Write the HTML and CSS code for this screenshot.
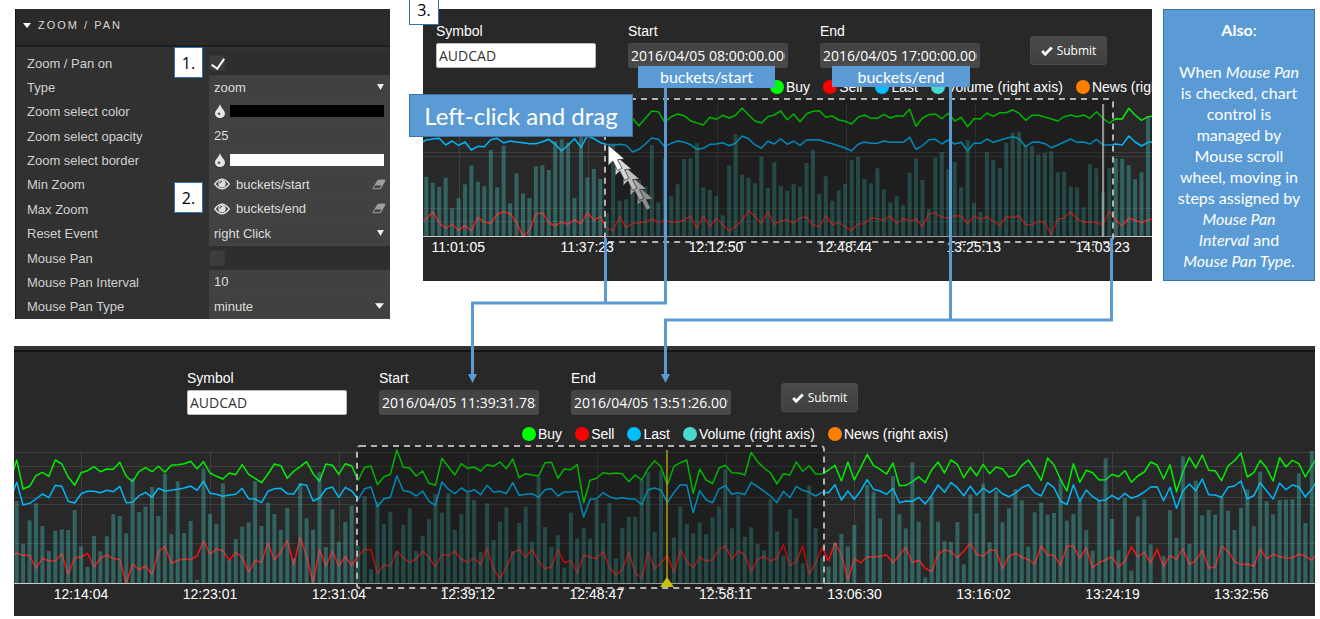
FILE: index.html
```html
<!DOCTYPE html>
<html lang="en">
<head>
<meta charset="utf-8">
<title>Zoom / Pan</title>
<link rel="stylesheet" href="styles.css">
</head>
<body>
<svg class="defs" aria-hidden="true">
  <symbol id="drop" viewBox="0 0 10 14"><path d="M5 0C4 4 0 6.500 0 9.500a5 4.500 0 0 0 10 0C10 6.500 6 4 5 0z" fill="#e6e6e6"/><circle cx="4" cy="9.800" r="1.300" fill="#555"/></symbol>
  <symbol id="eye" viewBox="0 0 16 12"><path d="M.8 6Q8-3.500 15.200 6 8 15.500.8 6z" fill="#444" stroke="#dcdcdc" stroke-width="1.500"/><circle cx="8" cy="5.700" r="3.700" fill="#dcdcdc"/><path d="M5.800 5.500A2.200 2.200 0 0 1 8 3.400" fill="none" stroke="#444"/></symbol>
  <symbol id="eraser" viewBox="0 0 15 11"><path d="M6.500.8h7.700L9 10H1z" fill="#999" stroke="#aaa"/><path d="M3.500 6.500h6.500L8.500 9.500H1.800z" fill="#414141"/></symbol>
  <symbol id="tick" viewBox="0 0 12 10"><path d="M1.200 5l3 3.200L10.800 1.500" fill="none" stroke="#fff" stroke-width="2.800"/></symbol>
  <symbol id="caret" viewBox="0 0 8 7"><path d="M0 0h8L4 7z" fill="#eee"/></symbol>
  <symbol id="caret-wide" viewBox="0 0 10 6"><path d="M0 0h10L5 6z" fill="#fff"/></symbol>
  <symbol id="pointer" viewBox="0 0 50 78" overflow="visible"><path d="M0 0V62L14 48 28 76 41 70 28 44 49 42z" stroke="#222" stroke-width="2"/></symbol>
</svg>

<main class="stage">
  <div class="top">
    <section class="settings">
      <h2 class="settings-head"><svg class="head-caret"><use href="#caret-wide"/></svg>ZOOM / PAN</h2>
      <div class="rows">
        <div class="row"><label for="on">Zoom / Pan on</label><div class="value bare"><input class="check" type="checkbox" id="on" checked></div></div>
        <div class="row"><label for="type">Type</label><div class="value"><select id="type"><option>zoom</option></select><svg class="caret"><use href="#caret"/></svg></div></div>
        <div class="row"><label for="color">Zoom select color</label><div class="value"><svg class="drop"><use href="#drop"/></svg><input class="swatch" type="color" id="color" value="#000000"></div></div>
        <div class="row"><label for="opacity">Zoom select opacity</label><div class="value"><input class="text" id="opacity" value="25"></div></div>
        <div class="row"><label for="border">Zoom select border</label><div class="value"><svg class="drop"><use href="#drop"/></svg><input class="swatch" type="color" id="border" value="#ffffff"></div></div>
        <div class="row"><label for="min">Min Zoom</label><div class="value"><svg class="eye"><use href="#eye"/></svg><input class="text" id="min" value="buckets/start"><button class="clear" aria-label="Clear"><svg><use href="#eraser"/></svg></button></div></div>
        <div class="row"><label for="max">Max Zoom</label><div class="value"><svg class="eye"><use href="#eye"/></svg><input class="text" id="max" value="buckets/end"><button class="clear" aria-label="Clear"><svg><use href="#eraser"/></svg></button></div></div>
        <div class="row"><label for="reset">Reset Event</label><div class="value"><select id="reset"><option>right Click</option></select><svg class="caret"><use href="#caret"/></svg></div></div>
        <div class="row"><label for="pan">Mouse Pan</label><div class="value bare"><input class="check" type="checkbox" id="pan"></div></div>
        <div class="row"><label for="interval">Mouse Pan Interval</label><div class="value"><input class="text" id="interval" value="10"></div></div>
        <div class="row"><label for="pantype">Mouse Pan Type</label><div class="value"><select id="pantype"><option>minute</option></select><svg class="caret wide"><use href="#caret-wide"/></svg></div></div>
      </div>
      <span class="step step-1">1.</span>
      <span class="step step-2">2.</span>
    </section>

    <section class="chart chart-before">
      <div class="chart-body">
        <form class="query">
          <div class="field"><label for="s1">Symbol</label><input class="light" id="s1" value="AUDCAD"></div>
          <div class="field"><label for="b1">Start</label><input id="b1" value="2016/04/05 08:00:00.000"></div>
          <div class="field"><label for="e1">End</label><input id="e1" value="2016/04/05 17:00:00.000"></div>
          <button class="submit" type="button"><svg><use href="#tick"/></svg>Submit</button>
        </form>
        <ul class="legend">
          <li class="buy">Buy</li><li class="sell">Sell</li><li class="last">Last</li><li class="volume">Volume (right axis)</li><li class="news">News (right axis)</li>
        </ul>
        <svg class="plot" id="before" viewBox="0 0 729 146" preserveAspectRatio="none"></svg>
        <div class="times"><span>11:01:05</span><span>11:37:23</span><span>12:12:50</span><span>12:48:44</span><span>13:25:13</span><span>14:03:23</span></div>
      </div>
    </section>

    <aside class="note">
      <p><b>Also</b>:</p>
      <p>When <i>Mouse Pan</i><br>is checked, chart<br>control is<br>managed by<br>Mouse scroll<br>wheel, moving in<br>steps assigned by<br><i>Mouse Pan<br>Interval</i> and<br><i>Mouse Pan Type</i>.</p>
    </aside>
  </div>

  <section class="chart chart-after">
    <div class="chart-body">
      <form class="query">
        <div class="field"><label for="s2">Symbol</label><input class="light" id="s2" value="AUDCAD"></div>
        <div class="field"><label for="b2">Start</label><input id="b2" value="2016/04/05 11:39:31.788"></div>
        <div class="field"><label for="e2">End</label><input id="e2" value="2016/04/05 13:51:26.009"></div>
        <button class="submit" type="button"><svg><use href="#tick"/></svg>Submit</button>
      </form>
      <ul class="legend">
        <li class="buy">Buy</li><li class="sell">Sell</li><li class="last">Last</li><li class="volume">Volume (right axis)</li><li class="news">News (right axis)</li>
      </ul>
      <svg class="plot" id="after" viewBox="0 0 1301 146" preserveAspectRatio="none"></svg>
      <div class="times"><span>12:14:04</span><span>12:23:01</span><span>12:31:04</span><span>12:39:12</span><span>12:48:47</span><span>12:58:11</span><span>13:06:30</span><span>13:16:02</span><span>13:24:19</span><span>13:32:56</span></div>
    </div>
  </section>

  <svg class="connectors" viewBox="0 0 1320 619" aria-hidden="true">
    <g fill="none" stroke="#5b9bd5" stroke-width="3">
      <path d="M605.500 238V303M665.500 86V303H472.500V376"/>
      <path d="M950.500 84V320M1111.500 238V320H665.500V376"/>
    </g>
    <path d="M468 374h9l-4.500 9zM661 374h9l-4.500 9z" fill="#5b9bd5"/>
    <g transform="translate(608 145)">
      <g fill="#8c8c8c"><use href="#pointer" x="29" y="40" width="17" height="26"/></g>
      <g fill="#a6a6a6"><use href="#pointer" x="22" y="30" width="17" height="26"/></g>
      <g fill="#bdbdbd"><use href="#pointer" x="15" y="20" width="17" height="26"/></g>
      <g fill="#d6d6d6"><use href="#pointer" x="7" y="10" width="17" height="26"/></g>
      <g fill="#fff"><use href="#pointer" width="17" height="26"/></g>
    </g>
  </svg>
  <span class="step step-3">3.</span>
  <span class="callout callout-start">buckets/start</span>
  <span class="callout callout-end">buckets/end</span>
  <span class="callout callout-drag">Left-click and drag</span>
</main>
<script src="charts.js"></script>
</body>
</html>
```
FILE: styles.css
```css
* { box-sizing: border-box; }
body { margin: 0; background: #fff; font-family: "Liberation Sans", Arial, sans-serif; font-size: 14px; }
input, select, button { font: inherit; color: inherit; margin: 0; border: 0; padding: 0; background: none; outline: 0; min-width: 0; }
.defs { position: absolute; width: 0; height: 0; }
.stage { position: relative; padding: 9px 5px 3px 14px; }
.top { display: grid; grid-template-columns: 375fr 33fr 729fr 11fr 152fr; align-items: start; margin: 0 0 27px 1px; }
.settings { grid-column: 1; }
.chart-before { grid-column: 3; }
.note { grid-column: 5; }

/* Settings panel */
.settings { position: relative; display: flex; flex-direction: column; min-height: 310px; background: #313131; border-left: 1px solid #111; color: #d0d0d0; font-size: 13px; }
.settings-head { display: flex; align-items: center; gap: 7px; height: 38px; margin: 0; padding: 0 0 4px 7px; background: #2b2a28; border-bottom: 2px solid #1d1d1d; font-size: 11px; font-weight: 400; letter-spacing: 2px; color: #d8d8d8; }
.head-caret { width: 8px; height: 5px; }
.rows { flex: 1; display: grid; grid-auto-rows: 1fr; padding-top: 4px; }
.row { display: grid; grid-template-columns: minmax(0, 193fr) minmax(0, 181fr); align-items: stretch; }
.row > label { display: flex; align-items: center; padding-left: 11px; white-space: nowrap; }
.value { display: flex; align-items: center; padding: 0 6px 0 5px; background: #414141; border-bottom: 1px solid #464646; color: #dedede; }
.value.bare { padding-left: 0; background: #2e2e2e; border-color: #2e2e2e; }
.value select { flex: 1; appearance: none; }
.value .text { flex: 1; width: 100%; }
.caret { width: 7px; height: 6px; }
.caret.wide { width: 9px; height: 6px; }
.drop { width: 10px; height: 14px; margin: 0 5px 0 1px; flex: none; }
.swatch { flex: 1; height: 12px; appearance: none; }
.swatch::-webkit-color-swatch-wrapper { padding: 0; }
.swatch::-webkit-color-swatch { border: 0; border-radius: 0; }
.eye { width: 16px; height: 12px; margin-right: 6px; flex: none; }
.clear { line-height: 0; margin-right: -2px; }
.clear svg { width: 14px; height: 11px; }
.check { appearance: none; width: 16px; height: 16px; border: 1px solid #383838; border-radius: 3px; background: #3d3d3d; }
.check:checked::after { content: ""; display: block; width: 6px; height: 11px; margin: 0 4px; border: solid #fff; border-width: 0 2px 2px 0; transform: rotate(35deg); }

/* Chart panels */
.chart { min-width: 0; background: #282828; color: #fff; }
.chart-body { overflow: hidden; padding-bottom: 26px; }
.query { display: flex; align-items: flex-start; padding: 13px 0 0 13px; }
.field { flex: none; width: 160px; margin-right: 32px; }
.field label { display: block; line-height: 18px; margin-bottom: 3px; }
.field input { display: block; width: 100%; height: 25px; padding: 0 2px; border: 1px solid #464646; border-radius: 2px; background: linear-gradient(#424242, #4b4b4b); font-family: "Open Sans", "Noto Sans", sans-serif; font-size: 14px; }
.field input.light { background: #fff; color: #333; border-color: #bbb; }
.submit { flex: none; display: flex; align-items: center; justify-content: center; gap: 4px; width: 77px; height: 29px; margin: 14px 0 0 18px; border-radius: 3px; border: 1px solid #4a4a4a; background: linear-gradient(#4a4a4a, #3f3f3f); font-family: "Open Sans", "Noto Sans", sans-serif; font-size: 12px; }
.submit svg { width: 12px; height: 10px; }
.legend { display: flex; gap: 13px; margin: 11px 0 0; padding: 0 0 0 347px; list-style: none; line-height: 16px; white-space: nowrap; }
.legend li { display: flex; align-items: center; gap: 2px; }
.legend li::before { content: ""; width: 14px; height: 14px; border-radius: 50%; background: currentColor; }
.legend .buy::before { background: #0f0; }
.legend .sell::before { background: #f00; }
.legend .last::before { background: #00bfff; }
.legend .volume::before { background: #48d8d0; }
.legend .news::before { background: #ff8000; }
.plot { display: block; width: 100%; height: 146px; overflow: visible; }
.times { display: flex; position: relative; margin-top: -2px; line-height: 16px; }
.times span { flex: none; text-align: center; }
.chart-before .times { margin-left: -4%; }
.chart-before .times span { width: 17%; }
.chart-after { border-top: 4px solid #333; }
.chart-after .chart-body { border-top: 2px solid #141414; padding-bottom: 14px; }
.chart-after .query { padding: 17px 0 0 173px; }
.chart-after .legend { padding-left: 508px; }
.chart-after .times { margin-left: .200%; }
.chart-after .times span { width: 9.930%; }

/* Plot marks */
.grid { stroke: #444; stroke-width: 1; opacity: .8; }
.line { fill: none; stroke-width: 1.500; stroke-linejoin: round; }
.bar { fill: #3fb6ad; fill-opacity: .42; }
.axis { stroke: #ccc; stroke-width: 1; }
.selection { fill: #000; fill-opacity: .25; stroke: #b4b4b4; stroke-width: 2; stroke-dasharray: 6 5; }

/* Annotations */
.note { min-height: 272px; padding: 9px 0; background: #5b9bd5; border: 1px solid #41719c; color: #fff; font-family: Lato, "Open Sans", sans-serif; font-size: 16px; line-height: 21px; text-align: center; white-space: nowrap; }
.note p { margin: 0 0 21px; }
.note p:last-child { margin: 0; }
.connectors { position: absolute; left: 0; top: 0; width: 100%; pointer-events: none; }
.step { position: absolute; display: grid; place-items: center; width: 29px; height: 31px; background: #fff; border: 1px solid #2e75b6; color: #000; font-family: "Open Sans", "Noto Sans", sans-serif; font-size: 16px; }
.step-1 { left: 158px; top: 38px; }
.step-2 { left: 158px; top: 173px; }
.step-3 { left: 409px; top: -6px; width: 30px; }
.callout { position: absolute; display: grid; place-items: center; background: #5b9bd5; border: 1px solid #41719c; color: #fff; font-family: Lato, "Open Sans", sans-serif; font-size: 16px; line-height: 18px; white-space: nowrap; }
.callout-start { left: 638px; top: 66px; width: 137px; height: 22px; border-color: #5b9bd5; }
.callout-end { left: 832px; top: 66px; width: 138px; height: 21px; border-color: #5b9bd5; }
.callout-drag { left: 409px; top: 94px; width: 224px; height: 43px; font-size: 24px; }
```
FILE: charts.js
```js
// Values are thirds of a pixel measured down from the top of the plot frame.
// Each line series carries one extra sample before the first bar.
const before = {
  shiftX: 423 - 410, shiftY: 5, first: 49,
  grid: [57, 61, 113, 126], tick: 36, box: [182, 4, 508, 143],
  buy: [85, ...Array(33).fill(85), 107,85,63,65,97,80,72,77,92,99,105,82,88,76,84,76,54,74,93,99,80,75,63,
    89,72,95,72,64,62,82,78,90,94,102,82,75,85,85,73,84,77,79,58,109,84,74,72,86,70,93,82,110,86,86,69,79,68,68,59,70,91,76,76,81,87,93,80,75,80,75,85,65,85,99,86,87,55,75,91,80,78],
  last: [160, 150,147,145,165,153,166,156,180,169,170,149,145,159,153,156,158,161,161,155,148,163,183,165,146,172,137,146,158,163,166,163,166,186,178,162,144,148,170,160,153,156,164,178,175,163,162,158,167,160,138,146,164,175,154,162,146,
    163,153,166,150,149,150,156,161,167,174,183,163,156,160,160,153,157,157,157,142,178,167,149,148,162,150,162,157,182,160,160,147,157,151,145,140,146,170,157,156,161,173,165,156,147,157,156,162,148,165,165,162,165,138,156,168,157,155],
  sell: [389, 387,366,398,415,402,421,406,423,382,397,400,373,365,371,397,440,421,372,368,398,407,397,403,389,402,368,390,380,416,420,381,412,401,398,396,386,398,391,396,396,390,378,415,378,409,386,404,423,409,392,362,378,401,365,403,393,
    389,399,384,381,405,410,377,405,397,410,422,402,401,383,386,391,377,401,385,394,386,410,371,369,382,385,377,378,401,379,388,381,394,406,380,382,377,404,404,394,398,433,387,384,366,386,397,396,398,404,363,391,407,385,391,398,389,387],
  volume: [260,278,291,263,355,325,283,227,275,289,180,292,167,340,250,310,324,229,226,240,153,148,158,324,125,262,237,267,370,160,332,328,260,270,290,165,337,205,319,283,207,205,160,292,300,319,376,227,133,254,263,280,200,294,217,288,
    303,281,290,219,180,313,259,332,301,282,209,201,267,280,235,298,337,319,346,248,206,270,358,203,186,238,215,292,150,338,366,187,209,234,158,128,125,165,168,193,189,184,247,245,289,292,352,223,235,308,233,205,206,225,268,247,80]
};
const after = {
  shiftX: 14, shiftY: 2, first: 50,
  grid: [10, 24, 55, 62, 101], tick: 67, box: [343, 4, 467, 142],
  buy: [120, 60,147,139,107,97,109,60,72,111,136,98,92,80,95,87,88,67,109,125,94,83,95,79,97,76,74,71,64,86,65,99,109,117,99,104,74,103,115,128,102,72,77,115,94,80,65,101,124,72,76,103,71,78,121,82,78,134,110,103,30,82,84,108,93,130,136,
    55,80,105,71,85,81,93,74,79,66,86,57,113,101,105,108,68,67,115,87,89,74,188,121,115,98,101,99,101,125,105,120,86,62,80,135,79,68,60,160,87,120,131,84,76,98,99,105,37,65,84,99,132,101,105,66,94,77,102,102,90,76,123,66,120,83,43,77,
    88,102,69,137,136,125,110,128,90,66,99,60,73,113,82,107,73,101,81,87,111,104,76,60,88,121,54,75,118,153,71,127,91,98,120,119,103,110,92,127,108,96,66,75,117,74,155,96,52,84,45,91,92,122,78,62,39,111,98,61,85,123,53,81,61,71,111,77,48],
  last: [178, 127,195,190,177,162,173,136,139,184,189,161,154,154,158,151,155,139,188,187,167,157,172,145,153,151,148,144,138,151,124,160,163,169,165,163,145,176,177,188,154,146,145,161,162,133,136,183,174,147,141,172,142,153,178,146,141,200,176,172,107,152,155,168,153,184,196,
    126,148,161,144,156,149,164,136,156,154,161,128,166,163,161,172,149,146,168,156,156,154,231,178,176,158,170,176,173,177,177,194,149,144,151,188,158,134,135,218,152,179,188,147,137,163,158,164,127,140,154,168,188,154,173,139,151,157,168,157,158,134,180,153,178,152,119,148,
    153,163,145,188,183,184,172,192,167,135,157,128,143,167,139,165,144,158,144,161,170,160,143,134,158,168,128,143,183,194,134,184,150,170,182,180,166,178,160,175,168,156,141,140,182,142,205,153,132,152,117,164,165,172,142,138,123,176,167,128,153,177,129,149,135,141,171,147,118],
  sell: [349, 340,346,346,385,355,363,362,341,403,353,351,340,381,354,345,356,358,430,371,390,378,403,337,319,370,361,357,359,348,302,343,327,332,361,337,352,397,362,367,308,361,335,302,375,292,349,428,328,378,333,378,350,377,348,328,329,400,375,378,334,354,368,356,334,352,381,
    342,347,334,358,367,354,374,323,387,416,382,339,329,352,328,364,386,380,329,368,362,398,345,351,356,334,382,405,389,337,398,415,336,386,368,347,398,330,365,383,352,364,359,329,318,358,333,345,395,358,349,363,355,314,377,364,318,402,369,322,362,308,345,419,356,368,350,351,
    349,345,368,345,322,368,360,385,395,343,329,335,353,333,309,343,349,331,331,386,349,340,351,359,372,318,346,346,376,319,319,355,323,384,367,360,350,381,364,320,351,337,369,328,380,347,358,326,374,361,331,384,381,319,334,364,374,372,379,327,357,343,350,353,354,342,348,361,335],
  volume: [183,312,241,190,258,333,272,268,270,210,319,381,288,334,289,223,228,280,115,216,200,141,228,101,283,124,279,243,419,85,222,252,130,360,297,260,247,124,258,188,222,269,203,355,129,235,269,97,321,208,306,246,197,318,168,388,186,252,215,334,254,205,333,288,238,162,
    218,160,270,222,158,180,336,190,300,245,202,333,249,200,305,110,261,321,286,383,218,295,265,296,180,249,189,355,265,231,230,120,97,276,91,430,293,200,251,280,247,283,232,200,88,265,165,290,262,312,331,178,274,347,208,235,370,137,264,352,380,308,282,319,255,430,135,155,
    235,430,108,223,265,67,245,412,170,245,304,306,246,373,163,220,131,307,153,247,205,147,181,320,217,188,224,219,118,242,222,183,270,332,182,55,237,331,174,392,229,178,313,430,347,211,293,49,312,122,226,210,224,172,212,270,204,148,259,95,184,223,180,179,178,100,249,33]
};
const AXIS = 142;
const STEP = 19.33 / 3;

function draw(id, d, width, extra) {
  const x = i => d.first / 3 - d.shiftX + STEP * i;
  const y = v => v / 3 - d.shiftY;
  const line = (values, color) =>
    `<polyline class="line" stroke="${color}" points="${values.map((v, i) => x(i - 1).toFixed(1) + ',' + y(v).toFixed(1)).join(' ')}"/>`;
  let out = d.grid.map(g => `<path class="grid" d="M0 ${g + 0.5}H${width}"/>`).join('');
  for (let t = d.tick; t < width; t += 128.9) out += `<path class="grid" d="M${Math.round(t) + 0.5} 9V${AXIS}"/>`;
  out += line(d.buy, '#00f000') + line(d.last, '#00b8f8') + line(d.sell, '#ff0c0c');
  out += d.volume.map((v, i) => `<rect class="bar" x="${(x(i) - 2).toFixed(1)}" y="${y(v).toFixed(1)}" width="4" height="${Math.max(0, AXIS - y(v)).toFixed(1)}"/>`).join('');
  out += `<path class="axis" d="M0 ${AXIS - 0.5}H${width}"/>`;
  const [bx, by, bw, bh] = d.box;
  out += `<rect class="selection" x="${bx}" y="${by}" width="${bw}" height="${bh}" rx="3"/>` + extra;
  document.getElementById(id).innerHTML = out;
}

draw('before', before, 729, '<path d="M680 9V142" stroke="#b4b4b4" stroke-width="1.500"/>');
draw('after', after, 1301, '<path d="M653 8V142" stroke="#a89c18" stroke-width="1.500"/><path d="M653 135l7 10h-14z" fill="#c8c010"/>');
```
